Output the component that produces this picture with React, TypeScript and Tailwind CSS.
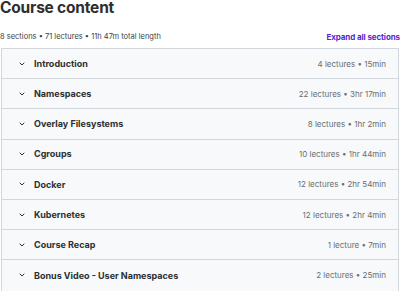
const sections = [
  { title: "Introduction", meta: "4 lectures • 15min" },
  { title: "Namespaces", meta: "22 lectures • 3hr 17min" },
  { title: "Overlay Filesystems", meta: "8 lectures • 1hr 2min" },
  { title: "Cgroups", meta: "10 lectures • 1hr 44min" },
  { title: "Docker", meta: "12 lectures • 2hr 54min" },
  { title: "Kubernetes", meta: "12 lectures • 2hr 4min" },
  { title: "Course Recap", meta: "1 lecture • 7min" },
  { title: "Bonus Video - User Namespaces", meta: "2 lectures • 25min" },
];

const Chevron = () => (
  <svg width="8" height="8" viewBox="0 0 24 24" fill="none" stroke="#2d2f31" strokeWidth="3" strokeLinecap="round" strokeLinejoin="round">
    <path d="M6 9l6 6 6-6" />
  </svg>
);

const App = () => {
  return (
    <div className="w-[400px] h-[291px] overflow-hidden bg-white text-[#2d2f31] font-['Inter',sans-serif]">
      <h2 className="text-[15.5px] leading-[16px] font-bold tracking-[-0.2px]">Course content</h2>

      <div className="flex items-center justify-between mt-[15px] h-[12px]">
        <span className="text-[7.5px] text-[#3e4143]">8 sections • 71 lectures • 11h 47m total length</span>
        <button className="text-[8px] font-bold text-[#5624d0] tracking-[-0.1px]">Expand all sections</button>
      </div>

      <div className="mt-[5px] ml-[1px] w-[398px] border border-[#d1d7dc]">
        {sections.map((s) => (
          <div key={s.title} className="h-[30.2px] flex items-center justify-between bg-[#f7f9fa] border-b border-[#d1d7dc] last:border-b-0 pl-[16px] pr-[12px]">
            <div className="flex items-center gap-[8px]">
              <Chevron />
              <span className="text-[9px] font-bold">{s.title}</span>
            </div>
            <span className="text-[8px] text-[#6a6f73]">{s.meta}</span>
          </div>
        ))}
      </div>
    </div>
  );
};

export default App;
